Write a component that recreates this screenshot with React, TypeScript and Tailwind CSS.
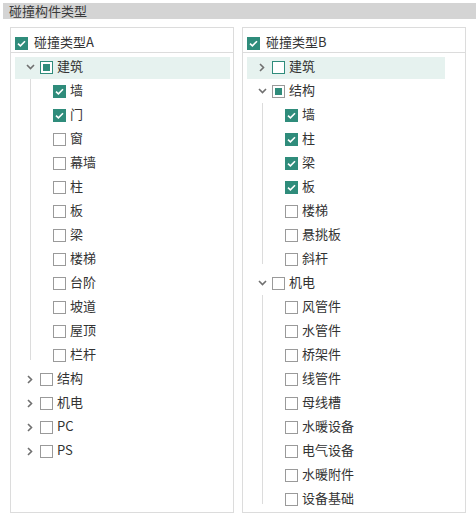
import React from "react";

type CheckState = "checked" | "unchecked" | "partial";

interface TreeNode {
  label: string;
  state: CheckState;
  expanded?: boolean;
  active?: boolean;
  children?: TreeNode[];
}

const panelA: TreeNode[] = [
  {
    label: "建筑",
    state: "partial",
    expanded: true,
    active: true,
    children: [
      { label: "墙", state: "checked" },
      { label: "门", state: "checked" },
      { label: "窗", state: "unchecked" },
      { label: "幕墙", state: "unchecked" },
      { label: "柱", state: "unchecked" },
      { label: "板", state: "unchecked" },
      { label: "梁", state: "unchecked" },
      { label: "楼梯", state: "unchecked" },
      { label: "台阶", state: "unchecked" },
      { label: "坡道", state: "unchecked" },
      { label: "屋顶", state: "unchecked" },
      { label: "栏杆", state: "unchecked" },
    ],
  },
  { label: "结构", state: "unchecked" },
  { label: "机电", state: "unchecked" },
  { label: "PC", state: "unchecked" },
  { label: "PS", state: "unchecked" },
];

const panelB: TreeNode[] = [
  { label: "建筑", state: "unchecked", active: true },
  {
    label: "结构",
    state: "partial",
    expanded: true,
    children: [
      { label: "墙", state: "checked" },
      { label: "柱", state: "checked" },
      { label: "梁", state: "checked" },
      { label: "板", state: "checked" },
      { label: "楼梯", state: "unchecked" },
      { label: "悬挑板", state: "unchecked" },
      { label: "斜杆", state: "unchecked" },
    ],
  },
  {
    label: "机电",
    state: "unchecked",
    expanded: true,
    children: [
      { label: "风管件", state: "unchecked" },
      { label: "水管件", state: "unchecked" },
      { label: "桥架件", state: "unchecked" },
      { label: "线管件", state: "unchecked" },
      { label: "母线槽", state: "unchecked" },
      { label: "水暖设备", state: "unchecked" },
      { label: "电气设备", state: "unchecked" },
      { label: "水暖附件", state: "unchecked" },
      { label: "设备基础", state: "unchecked" },
    ],
  },
];

function Check({ state, active }: { state: CheckState; active?: boolean }) {
  if (state === "checked") {
    return (
      <span className="flex h-[13px] w-[13px] shrink-0 items-center justify-center bg-[#2f8c7b]">
        <svg width="9" height="7" viewBox="0 0 9 7" fill="none">
          <path d="M1 3.6 L3.4 5.8 L8 1.2" stroke="#fff" strokeWidth="1.6" />
        </svg>
      </span>
    );
  }
  return (
    <span
      className={
        "flex h-[13px] w-[13px] shrink-0 items-center justify-center border bg-white " +
        (active ? "border-[#2f8c7b]" : "border-[#9a9a9a]")
      }
    >
      {state === "partial" && <span className="h-[7px] w-[7px] bg-[#2f8c7b]" />}
    </span>
  );
}

function Chevron({ open }: { open?: boolean }) {
  return (
    <span className="flex w-[16px] shrink-0 items-center justify-center">
      {open ? (
        <svg width="9" height="6" viewBox="0 0 9 6" fill="none">
          <path d="M1 1 L4.5 4.5 L8 1" stroke="#707070" strokeWidth="1.6" />
        </svg>
      ) : (
        <svg width="6" height="9" viewBox="0 0 6 9" fill="none">
          <path d="M1 1 L4.5 4.5 L1 8" stroke="#707070" strokeWidth="1.6" />
        </svg>
      )}
    </span>
  );
}

function Tree({ nodes, hlInset }: { nodes: TreeNode[]; hlInset: string }) {
  return (
    <div className="pt-[2px]">
      {nodes.map((node) => (
        <div key={node.label}>
          <div className="relative flex h-[24px] items-center pl-[11px]">
            {node.active && (
              <div className={"absolute left-[4px] top-[2px] h-[22px] bg-[#e6f2ef] " + hlInset} />
            )}
            <div className="relative flex items-center">
              <Chevron open={node.expanded} />
              <span className="ml-[2px]">
                <Check state={node.state} active={node.active} />
              </span>
              <span className="ml-[4px] pb-[3px] leading-[16px]">{node.label}</span>
            </div>
          </div>
          {node.expanded && node.children && (
            <div className="relative">
              <div className="absolute bottom-[7px] left-[19px] top-0 w-px bg-[#dcdcdc]" />
              {node.children.map((child) => (
                <div key={child.label} className="flex h-[24px] items-center pl-[42px]">
                  <Check state={child.state} />
                  <span className="ml-[4px] pb-[3px] leading-[16px]">{child.label}</span>
                </div>
              ))}
            </div>
          )}
        </div>
      ))}
    </div>
  );
}

function Panel({ title, nodes, hlInset }: { title: string; nodes: TreeNode[]; hlInset: string }) {
  return (
    <div className="h-[486px] w-[224px] overflow-hidden border border-[#dcdcdc] bg-white">
      <div className="flex h-[25px] items-center border-b border-[#dcdcdc] pl-[4px] pt-[6px]">
        <Check state="checked" />
        <span className="ml-[6px] pb-[2px] leading-[16px]">{title}</span>
      </div>
      <Tree nodes={nodes} hlInset={hlInset} />
    </div>
  );
}

export default function App() {
  return (
    <div
      className="h-[514px] w-[476px] overflow-hidden bg-white text-[13px] text-[#333]"
      style={{ fontFamily: '"Noto Sans CJK SC", "Noto Sans", sans-serif' }}
    >
      <div className="ml-[3px] mt-[3px] h-[16px] bg-[#d4d4d4] pl-[6px] leading-[16px] text-[#3a3a3a]">
        碰撞构件类型
      </div>
      <div className="mt-[8px] flex gap-[8px] pl-[10px]">
        <Panel title="碰撞类型A" nodes={panelA} hlInset="right-[3px]" />
        <Panel title="碰撞类型B" nodes={panelB} hlInset="right-[20px]" />
      </div>
    </div>
  );
}
